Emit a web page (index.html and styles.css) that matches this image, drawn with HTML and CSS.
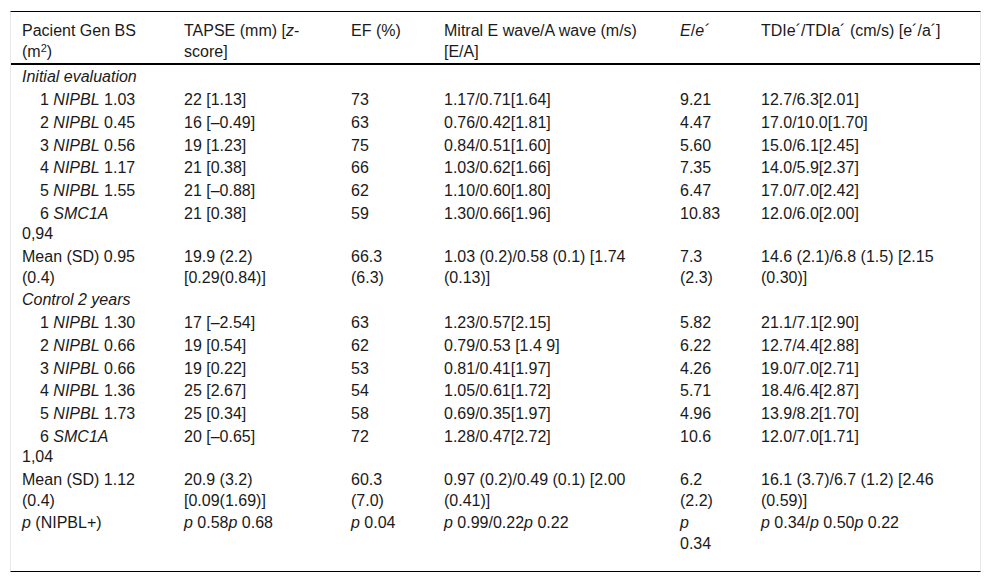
FILE: index.html
```html
<!DOCTYPE html>
<html lang="en">
<head>
<meta charset="utf-8">
<title>Table</title>
<link rel="stylesheet" href="styles.css">
</head>
<body>
<div class="wrap">
<table class="data">
<colgroup>
<col class="c1"><col class="c2"><col class="c3"><col class="c4"><col class="c5"><col class="c6">
</colgroup>
<thead>
<tr>
<th class="k1">Pacient Gen BS (m<sup>2</sup>)</th>
<th class="k2">TAPSE (mm) [<i>z</i>-score]</th>
<th class="k3">EF (%)</th>
<th class="k4">Mitral E wave/A wave (m/s) [E/A]</th>
<th class="k5"><i>E</i>/<i>e´</i></th>
<th class="k6">TDIe´/TDIa´ (cm/s) [e´/a´]</th>
</tr>
</thead>
<tbody>
<tr><td class="k1"><i>Initial evaluation</i></td><td class="k2"></td><td class="k3"></td><td class="k4"></td><td class="k5"></td><td class="k6"></td></tr>
<tr><td class="k1 ind">1 <i>NIPBL</i> 1.03</td><td class="k2">22 [1.13]</td><td class="k3">73</td><td class="k4">1.17/0.71[1.64]</td><td class="k5">9.21</td><td class="k6">12.7/6.3[2.01]</td></tr>
<tr><td class="k1 ind">2 <i>NIPBL</i> 0.45</td><td class="k2">16 [–0.49]</td><td class="k3">63</td><td class="k4">0.76/0.42[1.81]</td><td class="k5">4.47</td><td class="k6">17.0/10.0[1.70]</td></tr>
<tr><td class="k1 ind">3 <i>NIPBL</i> 0.56</td><td class="k2">19 [1.23]</td><td class="k3">75</td><td class="k4">0.84/0.51[1.60]</td><td class="k5">5.60</td><td class="k6">15.0/6.1[2.45]</td></tr>
<tr><td class="k1 ind">4 <i>NIPBL</i> 1.17</td><td class="k2">21 [0.38]</td><td class="k3">66</td><td class="k4">1.03/0.62[1.66]</td><td class="k5">7.35</td><td class="k6">14.0/5.9[2.37]</td></tr>
<tr><td class="k1 ind">5 <i>NIPBL</i> 1.55</td><td class="k2">21 [–0.88]</td><td class="k3">62</td><td class="k4">1.10/0.60[1.80]</td><td class="k5">6.47</td><td class="k6">17.0/7.0[2.42]</td></tr>
<tr><td class="k1 ind">6 <i>SMC1A</i> 0,94</td><td class="k2">21 [0.38]</td><td class="k3">59</td><td class="k4">1.30/0.66[1.96]</td><td class="k5">10.83</td><td class="k6">12.0/6.0[2.00]</td></tr>
<tr><td class="k1">Mean (SD) 0.95 (0.4)</td><td class="k2">19.9 (2.2) [0.29(0.84)]</td><td class="k3">66.3 (6.3)</td><td class="k4">1.03 (0.2)/0.58 (0.1) [1.74 (0.13)]</td><td class="k5">7.3 (2.3)</td><td class="k6">14.6 (2.1)/6.8 (1.5) [2.15 (0.30)]</td></tr>
<tr><td class="k1"><i>Control 2 years</i></td><td class="k2"></td><td class="k3"></td><td class="k4"></td><td class="k5"></td><td class="k6"></td></tr>
<tr><td class="k1 ind">1 <i>NIPBL</i> 1.30</td><td class="k2">17 [–2.54]</td><td class="k3">63</td><td class="k4">1.23/0.57[2.15]</td><td class="k5">5.82</td><td class="k6">21.1/7.1[2.90]</td></tr>
<tr><td class="k1 ind">2 <i>NIPBL</i> 0.66</td><td class="k2">19 [0.54]</td><td class="k3">62</td><td class="k4">0.79/0.53 [1.4 9]</td><td class="k5">6.22</td><td class="k6">12.7/4.4[2.88]</td></tr>
<tr><td class="k1 ind">3 <i>NIPBL</i> 0.66</td><td class="k2">19 [0.22]</td><td class="k3">53</td><td class="k4">0.81/0.41[1.97]</td><td class="k5">4.26</td><td class="k6">19.0/7.0[2.71]</td></tr>
<tr><td class="k1 ind">4 <i>NIPBL</i> 1.36</td><td class="k2">25 [2.67]</td><td class="k3">54</td><td class="k4">1.05/0.61[1.72]</td><td class="k5">5.71</td><td class="k6">18.4/6.4[2.87]</td></tr>
<tr><td class="k1 ind">5 <i>NIPBL</i> 1.73</td><td class="k2">25 [0.34]</td><td class="k3">58</td><td class="k4">0.69/0.35[1.97]</td><td class="k5">4.96</td><td class="k6">13.9/8.2[1.70]</td></tr>
<tr><td class="k1 ind">6 <i>SMC1A</i> 1,04</td><td class="k2">20 [–0.65]</td><td class="k3">72</td><td class="k4">1.28/0.47[2.72]</td><td class="k5">10.6</td><td class="k6">12.0/7.0[1.71]</td></tr>
<tr><td class="k1">Mean (SD) 1.12 (0.4)</td><td class="k2">20.9 (3.2) [0.09(1.69)]</td><td class="k3">60.3 (7.0)</td><td class="k4">0.97 (0.2)/0.49 (0.1) [2.00 (0.41)]</td><td class="k5">6.2 (2.2)</td><td class="k6">16.1 (3.7)/6.7 (1.2) [2.46 (0.59)]</td></tr>
<tr><td class="k1"><i>p</i> (NIPBL+)</td><td class="k2"><i>p</i> 0.58<i>p</i> 0.68</td><td class="k3"><i>p</i> 0.04</td><td class="k4"><i>p</i> 0.99/0.22<i>p</i> 0.22</td><td class="k5"><i>p</i> 0.34</td><td class="k6"><i>p</i> 0.34/<i>p</i> 0.50<i>p</i> 0.22</td></tr>
</tbody>
</table>
</div>
</body>
</html>
```
FILE: styles.css
```css
html, body {
  margin: 0;
  padding: 0;
  background: #ffffff;
}

body {
  font-family: "Liberation Sans", Arial, sans-serif;
  font-size: 16px;
  line-height: 20.7px;
  color: #1a1a1a;
}

.wrap {
  margin: 11px 0 0 10px;
  width: 971px;
  box-sizing: border-box;
  border-top: 1px solid #000;
  border-bottom: 1px solid #000;
  border-left: 1px solid #e8e8e8;
  border-right: 1px solid #e8e8e8;
  padding-bottom: 15px;
}

.data {
  width: 969px;
  table-layout: fixed;
  border-collapse: collapse;
}

.c1 { width: 162px; }
.c2 { width: 167px; }
.c3 { width: 93px; }
.c4 { width: 236px; }
.c5 { width: 81px; }
.c6 { width: 230px; }

.data th,
.data td {
  vertical-align: top;
  text-align: left;
  font-weight: normal;
  padding-top: 1px;
  padding-bottom: 1px;
  padding-left: 11px;
}

.data th {
  padding-top: 9px;
  padding-bottom: 1px;
  border-bottom: 2px solid #000;
}

.data tbody tr:first-child td {
  padding-top: 2px;
}

.k1 { padding-right: 33px; }
.k2 { padding-right: 26px; }
.k3 { padding-right: 31px; }
.k4 { padding-right: 20px; }
.k5 { padding-right: 28px; }
.k6 { padding-right: 24px; }

.ind {
  text-indent: 18px;
}

sup {
  font-size: 11px;
  line-height: 0;
  vertical-align: 5px;
}
```
